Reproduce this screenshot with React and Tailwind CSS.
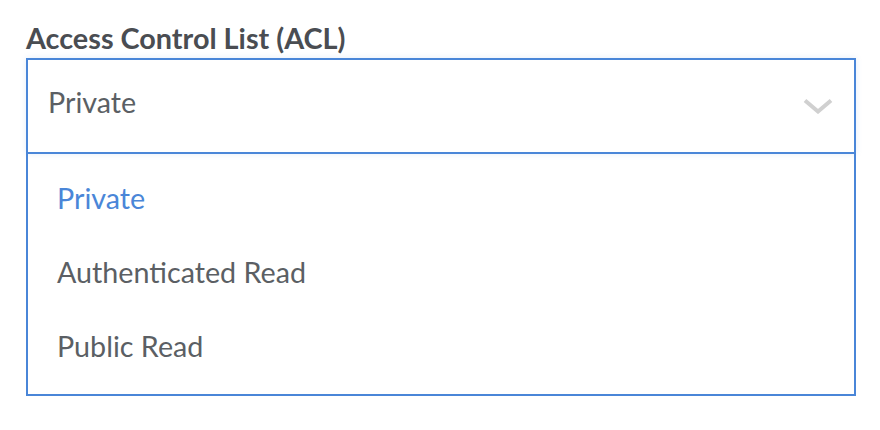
export default function App() {
  const options = ['Private', 'Authenticated Read', 'Public Read'];
  const selected = 'Private';

  return (
    <div className="w-[880px] h-[430px] bg-white font-['Lato','Liberation_Sans',sans-serif] pt-[21px] pl-[26px]">
      <label className="block h-[34px] leading-[34px] text-[28.8px] font-bold text-[#4a4d52] mb-[3px]">
        Access Control List (ACL)
      </label>
      <div className="w-[830px]">
        <div className="flex items-center justify-between h-[96px] border-2 border-[#4a86d8] pl-[20px] pr-[22px] pb-[8px] shadow-[0_0_6px_rgba(74,134,216,0.15)]">
          <span className="text-[28.7px] leading-[35px] text-[#5b5f64]">{selected}</span>
          <svg width="30" height="16" viewBox="0 0 30 16" fill="none" className="mt-[8px] -mr-[1px]">
            <path d="M2 2.5 L15 13.5 L28 2.5" stroke="#d0d0d0" strokeWidth="4" />
          </svg>
        </div>
        <ul className="border-2 border-t-0 border-[#4a86d8] pt-[7px] pb-[11px]">
          {options.map((opt) => (
            <li
              key={opt}
              className={`flex items-center h-[74px] pl-[29px] text-[28.7px] leading-[35px] ${
                opt === selected ? 'text-[#4a86d8]' : 'text-[#5b5f64]'
              }`}
            >
              {opt}
            </li>
          ))}
        </ul>
      </div>
    </div>
  );
}
